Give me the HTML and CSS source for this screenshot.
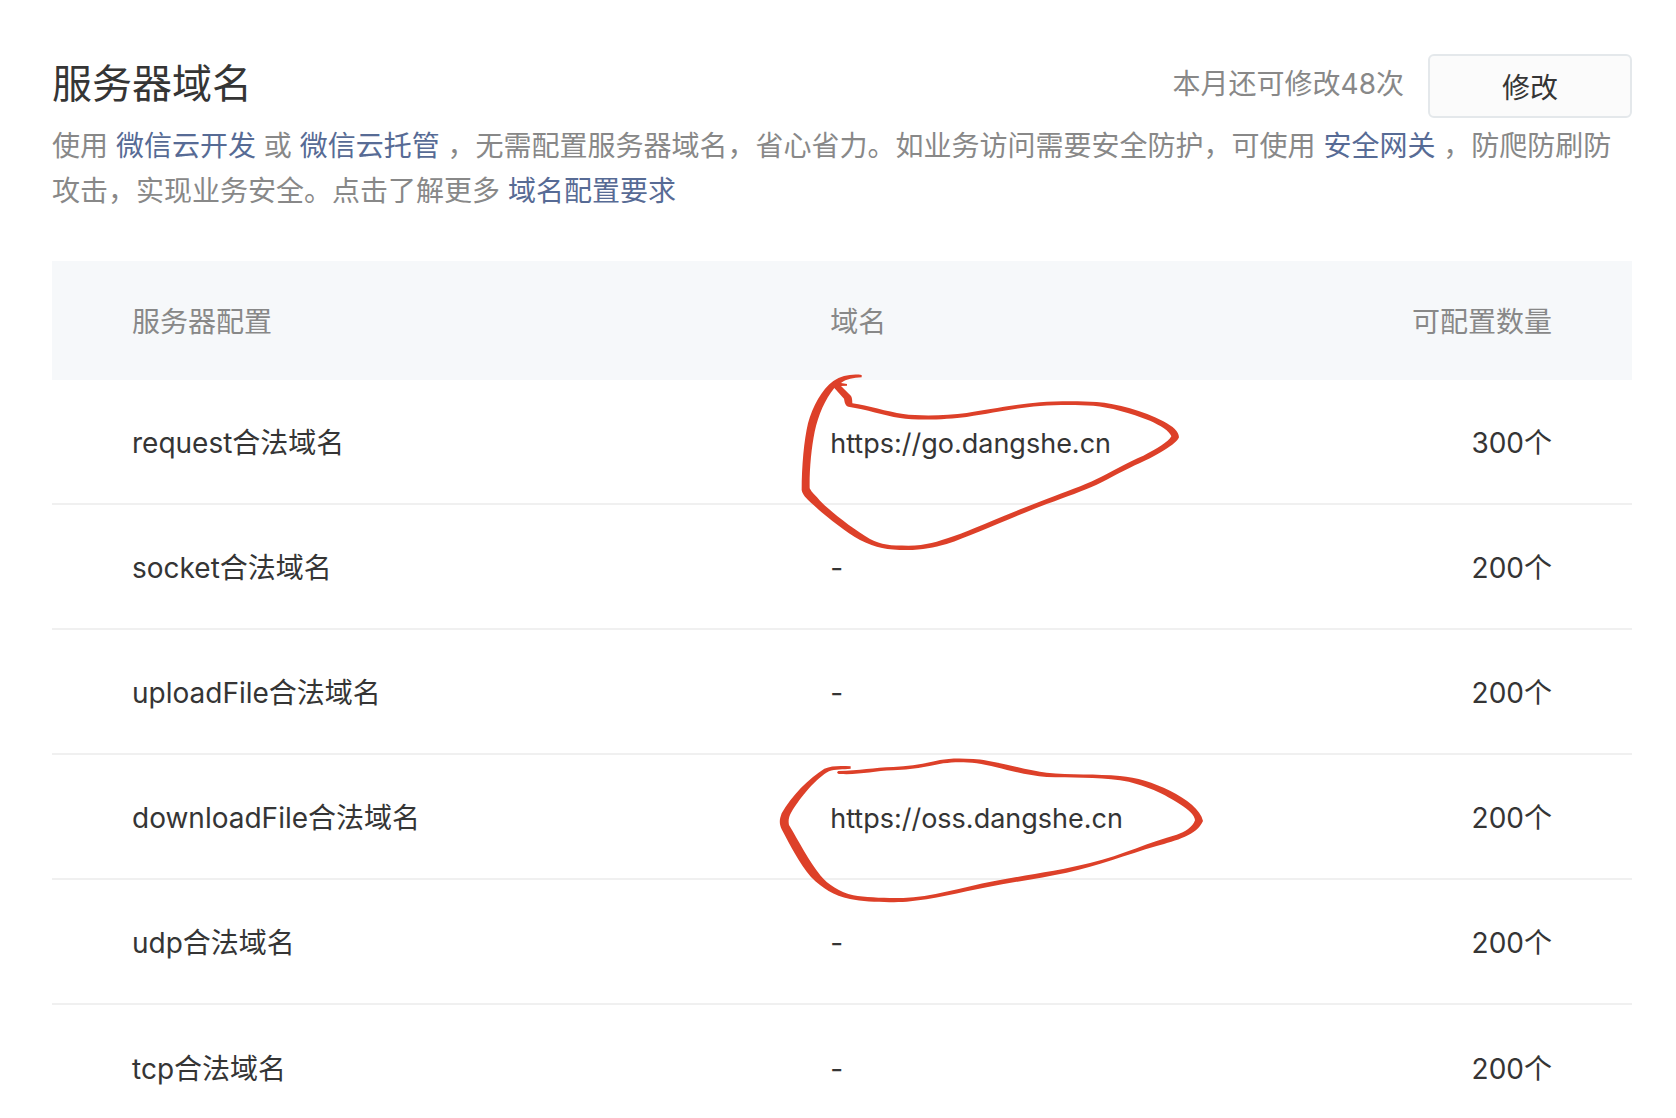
FILE: index.html
```
<!DOCTYPE html>
<html lang="zh-CN">
<head>
    <meta charset="UTF-8">
    <title>服务器域名</title>
    <link rel="stylesheet" href="styles.css">
</head>
<body>
    <main class="page">
        <header class="page-header">
            <h1 class="title">服务器域名</h1>
            <span class="quota">本月还可修改48次</span>
            <button type="button" class="btn">修改</button>
        </header>

        <p class="desc">使用 <a href="#">微信云开发</a> 或 <a href="#">微信云托管</a> ，无需配置服务器域名，省心省力。如业务访问需要安全防护，可使用 <a href="#">安全网关</a> ，防爬防刷防攻击，实现业务安全。点击了解更多 <a href="#">域名配置要求</a></p>

        <table class="domain-table">
            <thead>
                <tr>
                    <th class="col-name">服务器配置</th>
                    <th class="col-domain">域名</th>
                    <th class="col-count">可配置数量</th>
                </tr>
            </thead>
            <tbody>
                <tr>
                    <td class="col-name">request合法域名</td>
                    <td class="col-domain">
                        <span class="marked">https://go.dangshe.cn
                            <svg class="mark mark-request" viewBox="0 0 1260 600" aria-hidden="true">
                                <path fill-rule="evenodd" d="M245 45C215 41 185 47 160 63C125 88 98 140 84 190C72 240 65 320 65 390C68 404 75 410 85 421C120 455 190 512 240 540C290 565 320 570 380 570C430 570 460 563 500 552C580 525 680 478 800 432C860 410 910 392 950 374C990 355 1040 326 1080 309C1130 287 1190 252 1197 232C1196 214 1180 200 1150 184C1090 152 1010 131 950 126C900 123 830 123 780 127C700 134 620 150 560 159C500 167 420 169 370 162C320 155 265 137 217 130C217 115 215 108 208 103L183 78L201 77L201 72L183 69C200 56 220 54 245 52ZM163 84C135 118 115 165 104 215C94 265 88 330 89 385C95 398 110 410 120 422C160 462 220 507 270 537C305 555 330 557 385 557C440 557 470 546 520 529C600 499 700 454 800 417C860 394 910 377 950 357C990 337 1050 304 1090 287C1130 267 1165 246 1174 229C1170 213 1140 196 1110 182C1050 158 990 142 940 137C890 134 830 134 780 138C700 145 640 159 560 171C500 179 410 182 360 174C310 166 260 148 205 140C195 136 194 126 192 116Z"/>
                            </svg>
                        </span>
                    </td>
                    <td class="col-count">300个</td>
                </tr>
                <tr>
                    <td class="col-name">socket合法域名</td>
                    <td class="col-domain">-</td>
                    <td class="col-count">200个</td>
                </tr>
                <tr>
                    <td class="col-name">uploadFile合法域名</td>
                    <td class="col-domain">-</td>
                    <td class="col-count">200个</td>
                </tr>
                <tr>
                    <td class="col-name">downloadFile合法域名</td>
                    <td class="col-domain">
                        <span class="marked">https://oss.dangshe.cn
                            <svg class="mark mark-download" viewBox="0 0 1380 540" aria-hidden="true">
                                <path d="M272 79C240 77 215 77 193 86C148 114 93 168 65 220C58 240 57 250 65 268C93 320 118 371 153 411C188 446 220 466 270 477C320 487 390 488 440 485C520 479 600 457 680 442C760 426 850 413 920 398C1010 379 1100 344 1190 318C1250 301 1310 286 1329 243C1322 208 1280 178 1230 152C1180 128 1130 112 1080 108C1010 101 930 105 860 98C800 92 700 60 640 57C600 54 565 55 540 60C500 70 450 79 400 81C340 83 300 92 235 93C228 97 232 102 240 102C300 105 340 93 400 91C450 89 500 81 550 70C580 66 610 65 650 70C710 79 790 107 860 111C930 114 1010 111 1080 121C1150 131 1220 166 1260 193C1285 209 1304 225 1305 241C1298 261 1275 277 1250 284C1170 305 1090 344 990 369C900 392 790 406 700 424C610 441 510 473 430 474C380 475 320 473 280 466C240 457 202 432 182 407C147 364 117 305 87 255C84 240 87 230 94 217C122 170 172 112 207 94C225 86 250 89 272 86Z"/>
                            </svg>
                        </span>
                    </td>
                    <td class="col-count">200个</td>
                </tr>
                <tr>
                    <td class="col-name">udp合法域名</td>
                    <td class="col-domain">-</td>
                    <td class="col-count">200个</td>
                </tr>
                <tr>
                    <td class="col-name">tcp合法域名</td>
                    <td class="col-domain">-</td>
                    <td class="col-count">200个</td>
                </tr>
            </tbody>
        </table>
    </main>
</body>
</html>
```
FILE: styles.css
```
* {
    box-sizing: border-box;
}
body {
    margin: 0;
    background-color: #fff;
    color: #353535;
    font-family: Inter, "Noto Sans CJK SC", sans-serif;
    font-size: 28px;
    line-height: 45px;
}
.page {
    padding: 54px 44px 0 52px;
}
.page-header {
    display: flex;
    align-items: flex-start;
    gap: 24px;
    line-height: 60px;
}
.title {
    flex: 1;
    margin: 0;
    font-size: 40px;
    font-weight: 400;
    line-height: 60px;
}
.quota {
    color: #888;
}
.btn {
    width: 204px;
    height: 64px;
    padding: 2px 0 0;
    border: 2px solid #e4e8eb;
    border-radius: 6px;
    background-color: #fbfbfb;
    color: #353535;
    font: inherit;
    cursor: pointer;
}
.desc {
    margin: 6px 0 0;
    color: #888;
}
.desc a {
    color: #576b95;
    text-decoration: none;
}
.domain-table {
    width: 100%;
    margin-top: 47px;
    border-collapse: separate;
    border-spacing: 0;
    table-layout: fixed;
}
.domain-table th,
.domain-table td {
    height: 125px;
    padding: 4px 0 0;
}
.domain-table th {
    height: 119px;
    background-color: #f6f8fa;
    color: #888;
    font-weight: 400;
    text-align: left;
}
.domain-table td {
    border-bottom: 2px solid #f0f0f0;
}
.domain-table tr:last-child td {
    border-bottom: none;
}
.domain-table .col-name {
    width: 49%;
    padding-left: 80px;
}
.domain-table .col-domain {
    padding-left: 4px;
}
.domain-table .col-count {
    width: 20%;
    padding-right: 80px;
    text-align: right;
}
/* hand-drawn circles round the configured domains */
.marked {
    display: inline-block;
    position: relative;
    font-size: 27px;
}
.mark {
    position: absolute;
    fill: #dd4029;
    pointer-events: none;
}
.mark-request {
    top: -61px;
    left: -50px;
    width: 420px;
    height: 200px;
}
.mark-download {
    top: -56px;
    left: -70px;
    width: 460px;
    height: 180px;
}
```
